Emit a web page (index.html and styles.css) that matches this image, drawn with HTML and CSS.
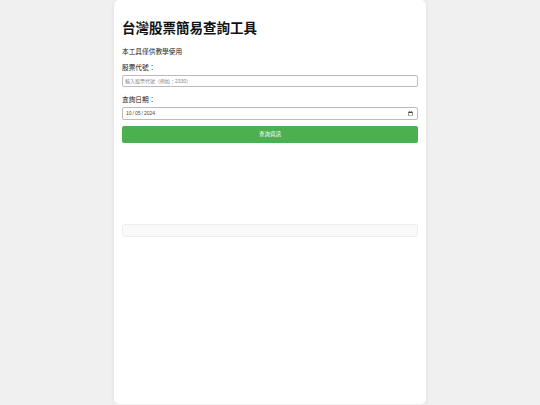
FILE: index.html
```html
<!DOCTYPE html>
<html lang="zh-Hant">
<head>
    <meta charset="UTF-8">
    <meta name="viewport" content="width=device-width, initial-scale=1.0">
    <title>台灣股票簡易查詢工具</title>
    <link rel="stylesheet" href="styles.css">
</head>
<body>
    <div class="container">
        <h1>台灣股票簡易查詢工具</h1>
        <p class="note">本工具僅供教學使用</p>
        <label class="label" for="stock">股票代號：</label>
        <input type="text" id="stock" class="field" placeholder="輸入股票代號（例如：2330）">
        <label class="label" for="date">查詢日期：</label>
        <input type="date" id="date" class="field" value="2024-10-05">
        <button id="search" class="btn">查詢資訊</button>
        <div id="chart" class="chart"></div>
        <div id="result" class="result"></div>
    </div>
</body>
</html>
```

FILE: styles.css
```css
body {
    font-family: "Liberation Sans", "Noto Sans CJK TC", sans-serif;
    background-color: #f0f0f0;
    margin: 0;
}
.container {
    width: 312px;
    height: 404px;
    box-sizing: border-box;
    margin: 0 auto;
    padding: 8px;
    background-color: #fff;
    border-radius: 5px;
    box-shadow: 0 0 4px rgba(0, 0, 0, 0.08);
    display: flex;
    flex-direction: column;
}
h1 {
    font-size: 13.5px;
    line-height: 20px;
    margin: 11px 0 0;
    color: #111;
}
.note {
    font-size: 6.7px;
    line-height: 8px;
    margin: 9px 0 0;
    color: #222;
}
.label {
    font-size: 6.7px;
    line-height: 8px;
    margin-top: 8px;
    color: #222;
}
.label + .field {
    margin-top: 3px;
}
.field + .label {
    margin-top: 9px;
}
.field {
    height: 12px;
    box-sizing: border-box;
    border: 1px solid #bbb;
    border-radius: 2px;
    padding: 0 2px;
    font-family: "Liberation Sans", "Noto Sans CJK TC", sans-serif;
    font-size: 5px;
    color: #444;
    outline: none;
}
.field::placeholder {
    color: #888;
}
input[type="date"] {
    height: 12.5px;
    font-size: 5px;
}
.btn {
    margin-top: 6.5px;
    height: 16.5px;
    border: none;
    border-radius: 2px;
    background-color: #4caf50;
    color: #fff;
    font-family: "Liberation Sans", "Noto Sans CJK TC", sans-serif;
    font-size: 5.5px;
    cursor: pointer;
}
.chart {
    height: 81.5px;
}
.result {
    height: 13px;
    box-sizing: border-box;
    background-color: #f9f9f9;
    border: 1px solid #eee;
    border-radius: 3px;
}
```
